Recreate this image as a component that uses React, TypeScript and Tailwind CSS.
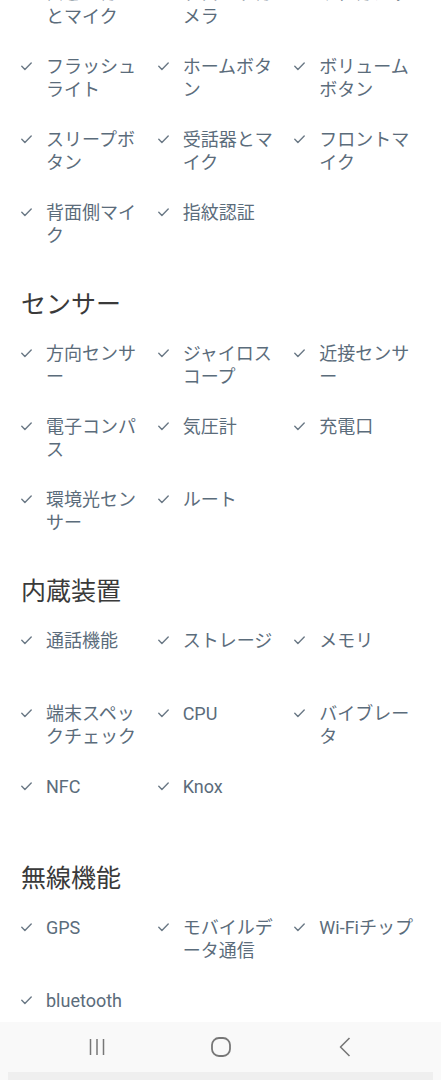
const sections: { title?: string; items: string[] }[] = [
  {
    items: [
      "スピーカーとマイク",
      "フロントカメラ",
      "リアカメラ",
      "フラッシュライト",
      "ホームボタン",
      "ボリュームボタン",
      "スリープボタン",
      "受話器とマイク",
      "フロントマイク",
      "背面側マイク",
      "指紋認証",
    ],
  },
  {
    title: "センサー",
    items: [
      "方向センサー",
      "ジャイロスコープ",
      "近接センサー",
      "電子コンパス",
      "気圧計",
      "充電口",
      "環境光センサー",
      "ルート",
    ],
  },
  {
    title: "内蔵装置",
    items: [
      "通話機能",
      "ストレージ",
      "メモリ",
      "端末スペックチェック",
      "CPU",
      "バイブレータ",
      "NFC",
      "Knox",
    ],
  },
  {
    title: "無線機能",
    items: ["GPS", "モバイルデータ通信", "Wi-Fiチップ", "bluetooth"],
  },
];

function Check() {
  return (
    <svg width="11" height="9" viewBox="0 0 11 9" fill="none">
      <path
        d="M0.8 4.2 L3.9 7.4 L10.2 1"
        stroke="#6b7986"
        strokeWidth="1.4"
        strokeLinecap="round"
        strokeLinejoin="round"
      />
    </svg>
  );
}

function Item({ label }: { label: string }) {
  return (
    <div className="flex items-start">
      <div className="w-[25px] h-[23px] flex items-center">
        <Check />
      </div>
      <span className="w-[100px] text-[18px] leading-[23px] text-[#5b6c7b] [line-break:anywhere]">
        {label}
      </span>
    </div>
  );
}

export default function App() {
  return (
    <div className="h-[1080px] flex flex-col bg-white overflow-hidden font-['Roboto','Noto_Sans_CJK_JP',sans-serif]">
      {/* scrolled list */}
      <div className="flex-1 overflow-hidden">
        <div className="-mt-[18px] pl-[21px] pr-[10px]">
          {sections.map((s, i) => (
            <div key={i}>
              {s.title && (
                <h2 className="mt-[15px] mb-[21px] text-[25px] leading-[32px] text-[#3a3a3a]">
                  {s.title}
                </h2>
              )}
              <div className="grid grid-cols-3 auto-rows-[73px]">
                {s.items.map((it) => (
                  <Item key={it} label={it} />
                ))}
              </div>
            </div>
          ))}
        </div>
      </div>

      {/* system nav bar */}
      <div className="h-[58px] bg-[#f9f9f9] flex flex-col">
        <div className="flex-1 flex justify-center items-center">
          <div className="w-[124px] flex justify-center">
            <svg width="18" height="18" viewBox="0 0 18 18">
              <path
                d="M2.5 1v16M9 1v16M15.5 1v16"
                stroke="#777"
                strokeWidth="1.5"
              />
            </svg>
          </div>
          <div className="w-[124px] flex justify-center">
            <svg width="20" height="20" viewBox="0 0 20 20" fill="none">
              <rect
                x="1"
                y="1"
                width="18"
                height="18"
                rx="7"
                stroke="#777"
                strokeWidth="1.8"
              />
            </svg>
          </div>
          <div className="w-[124px] flex justify-center">
            <svg width="12" height="20" viewBox="0 0 12 20" fill="none">
              <path
                d="M10.5 1 L1.5 10 L10.5 19"
                stroke="#777"
                strokeWidth="1.6"
                strokeLinejoin="round"
              />
            </svg>
          </div>
        </div>
        <div className="h-[8px] mx-[8px] bg-[#efefef]" />
      </div>
    </div>
  );
}
